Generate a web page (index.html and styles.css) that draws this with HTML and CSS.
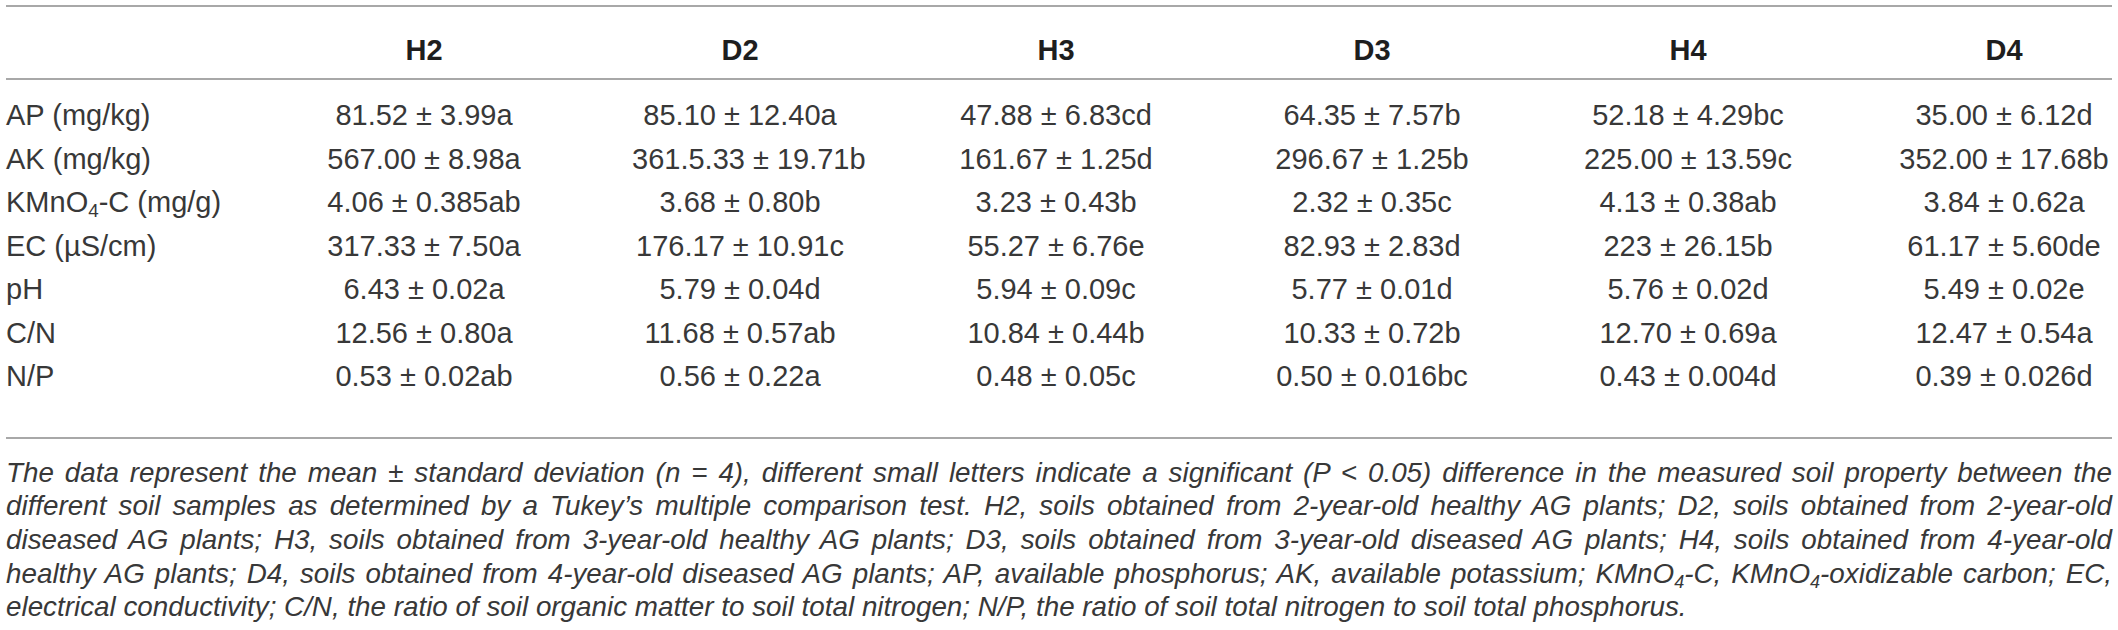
FILE: index.html
```html
<!DOCTYPE html>
<html lang="en">
<head>
    <meta charset="UTF-8">
    <title>Soil properties table</title>
    <link rel="stylesheet" href="styles.css">
</head>
<body>
    <div class="table-wrap">
        <table class="soil-table">
            <colgroup>
                <col class="col-label">
                <col span="6" class="col-value">
            </colgroup>
            <thead>
                <tr>
                    <th></th>
                    <th>H2</th>
                    <th>D2</th>
                    <th>H3</th>
                    <th>D3</th>
                    <th>H4</th>
                    <th>D4</th>
                </tr>
            </thead>
            <tbody>
                <tr>
                    <td>AP (mg/kg)</td>
                    <td>81.52 ± 3.99a</td>
                    <td>85.10 ± 12.40a</td>
                    <td>47.88 ± 6.83cd</td>
                    <td>64.35 ± 7.57b</td>
                    <td>52.18 ± 4.29bc</td>
                    <td>35.00 ± 6.12d</td>
                </tr>
                <tr>
                    <td>AK (mg/kg)</td>
                    <td>567.00 ± 8.98a</td>
                    <td>361.5.33 ± 19.71b</td>
                    <td>161.67 ± 1.25d</td>
                    <td>296.67 ± 1.25b</td>
                    <td>225.00 ± 13.59c</td>
                    <td>352.00 ± 17.68b</td>
                </tr>
                <tr>
                    <td>KMnO<sub>4</sub>-C (mg/g)</td>
                    <td>4.06 ± 0.385ab</td>
                    <td>3.68 ± 0.80b</td>
                    <td>3.23 ± 0.43b</td>
                    <td>2.32 ± 0.35c</td>
                    <td>4.13 ± 0.38ab</td>
                    <td>3.84 ± 0.62a</td>
                </tr>
                <tr>
                    <td>EC (µS/cm)</td>
                    <td>317.33 ± 7.50a</td>
                    <td>176.17 ± 10.91c</td>
                    <td>55.27 ± 6.76e</td>
                    <td>82.93 ± 2.83d</td>
                    <td>223 ± 26.15b</td>
                    <td>61.17 ± 5.60de</td>
                </tr>
                <tr>
                    <td>pH</td>
                    <td>6.43 ± 0.02a</td>
                    <td>5.79 ± 0.04d</td>
                    <td>5.94 ± 0.09c</td>
                    <td>5.77 ± 0.01d</td>
                    <td>5.76 ± 0.02d</td>
                    <td>5.49 ± 0.02e</td>
                </tr>
                <tr>
                    <td>C/N</td>
                    <td>12.56 ± 0.80a</td>
                    <td>11.68 ± 0.57ab</td>
                    <td>10.84 ± 0.44b</td>
                    <td>10.33 ± 0.72b</td>
                    <td>12.70 ± 0.69a</td>
                    <td>12.47 ± 0.54a</td>
                </tr>
                <tr>
                    <td>N/P</td>
                    <td>0.53 ± 0.02ab</td>
                    <td>0.56 ± 0.22a</td>
                    <td>0.48 ± 0.05c</td>
                    <td>0.50 ± 0.016bc</td>
                    <td>0.43 ± 0.004d</td>
                    <td>0.39 ± 0.026d</td>
                </tr>
            </tbody>
        </table>

        <p class="table-note">The data represent the mean ± standard deviation (n = 4), different small letters indicate a significant (P &lt; 0.05) difference in the measured soil property between the different soil samples as determined by a Tukey’s multiple comparison test. H2, soils obtained from 2-year-old healthy AG plants; D2, soils obtained from 2-year-old diseased AG plants; H3, soils obtained from 3-year-old healthy AG plants; D3, soils obtained from 3-year-old diseased AG plants; H4, soils obtained from 4-year-old healthy AG plants; D4, soils obtained from 4-year-old diseased AG plants; AP, available phosphorus; AK, available potassium; KMnO<sub>4</sub>-C, KMnO<sub>4</sub>-oxidizable carbon; EC, electrical conductivity; C/N, the ratio of soil organic matter to soil total nitrogen; N/P, the ratio of soil total nitrogen to soil total phosphorus.</p>
    </div>
</body>
</html>
```

FILE: styles.css
```css
body {
    margin: 0;
    background: #fff;
    color: #383838;
    font-family: "Liberation Sans", Arial, sans-serif;
}
.table-wrap {
    width: 2106px;
    padding: 5px 6px 0;
}
.soil-table {
    width: 100%;
    table-layout: fixed;
    border-collapse: collapse;
    border-top: 2px solid #a8a8a8;
    border-bottom: 2px solid #a8a8a8;
    font-size: 29px;
}
.col-label {
    width: 210px;
}
.soil-table th,
.soil-table td {
    padding: 0;
    white-space: nowrap;
}
.soil-table th {
    padding-top: 26px;
    padding-bottom: 11px;
    line-height: 34px;
    font-weight: bold;
    color: #1e1e1e;
    border-bottom: 2px solid #a8a8a8;
}
.soil-table th:not(:first-child),
.soil-table td:not(:first-child) {
    padding-left: 100px;
    text-align: center;
}
.soil-table td {
    line-height: 43.5px;
}
.soil-table tbody tr:first-child td {
    padding-top: 14px;
}
.soil-table tbody tr:last-child td {
    padding-bottom: 38px;
}
sub {
    font-size: 65%;
    line-height: 0;
    vertical-align: -0.25em;
}
.table-note {
    margin: 17px 0 0;
    font-size: 27.8px;
    font-style: italic;
    line-height: 33.7px;
    text-align: justify;
}
```
